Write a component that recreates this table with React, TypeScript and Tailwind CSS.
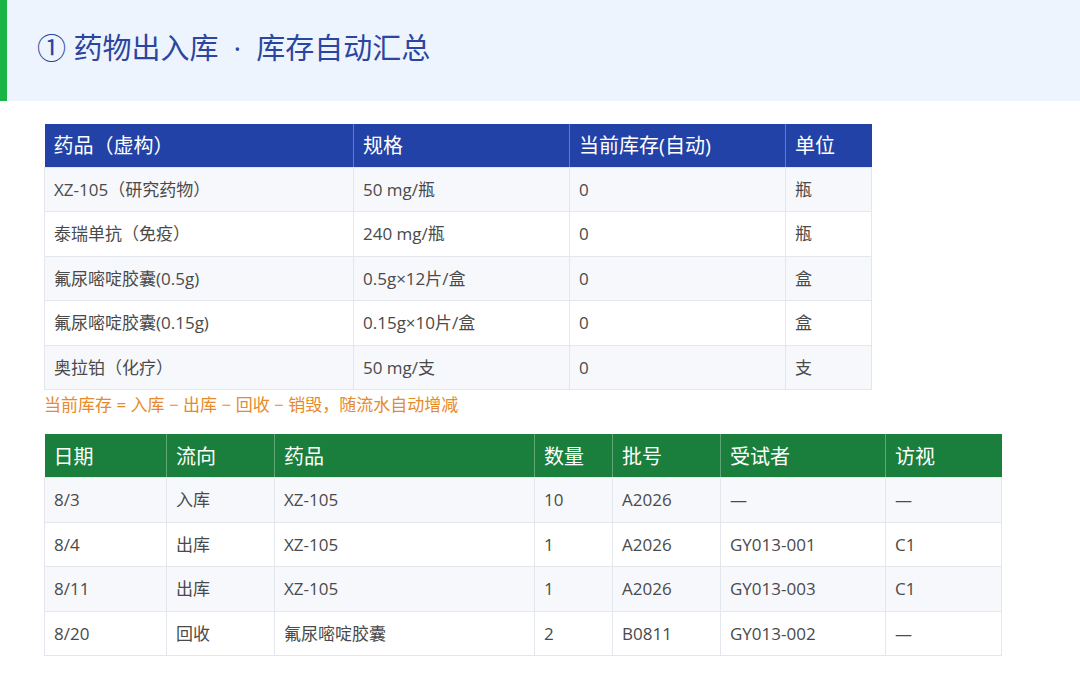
const stockCols = [
  { label: '药品（虚构）', w: 'w-[309px]' },
  { label: '规格', w: 'w-[216px]' },
  { label: '当前库存(自动)', w: 'w-[216px]' },
  { label: '单位', w: 'w-[86px]' },
];

const stockRows = [
  ['XZ-105（研究药物）', '50 mg/瓶', '0', '瓶'],
  ['泰瑞单抗（免疫）', '240 mg/瓶', '0', '瓶'],
  ['氟尿嘧啶胶囊(0.5g)', '0.5g×12片/盒', '0', '盒'],
  ['氟尿嘧啶胶囊(0.15g)', '0.15g×10片/盒', '0', '盒'],
  ['奥拉铂（化疗）', '50 mg/支', '0', '支'],
];

const flowCols = [
  { label: '日期', w: 'w-[122px]' },
  { label: '流向', w: 'w-[108px]' },
  { label: '药品', w: 'w-[260px]' },
  { label: '数量', w: 'w-[78px]' },
  { label: '批号', w: 'w-[108px]' },
  { label: '受试者', w: 'w-[165px]' },
  { label: '访视', w: 'w-[116px]' },
];

const flowRows = [
  ['8/3', '入库', 'XZ-105', '10', 'A2026', '—', '—'],
  ['8/4', '出库', 'XZ-105', '1', 'A2026', 'GY013-001', 'C1'],
  ['8/11', '出库', 'XZ-105', '1', 'A2026', 'GY013-003', 'C1'],
  ['8/20', '回收', '氟尿嘧啶胶囊', '2', 'B0811', 'GY013-002', '—'],
];

type Col = { label: string; w: string };

function DataTable({
  cols,
  rows,
  headBg,
  width,
}: {
  cols: Col[];
  rows: string[][];
  headBg: string;
  width: string;
}) {
  return (
    <table className={`${width} border-collapse table-fixed`}>
      <thead>
        <tr className={headBg}>
          {cols.map((c, i) => (
            <th
              key={c.label}
              className={`${c.w} h-[43px] px-[9px] pt-[2px] text-left align-middle text-[20px] font-normal text-white ${
                i > 0 ? 'border-l border-white/30' : ''
              }`}
            >
              {c.label}
            </th>
          ))}
        </tr>
      </thead>
      <tbody>
        {rows.map((r, ri) => (
          <tr key={ri} className={ri % 2 === 0 ? 'bg-[#f7f8fc]' : 'bg-white'}>
            {r.map((cell, ci) => (
              <td
                key={ci}
                className="h-[44.6px] border border-[#e3e6ec] px-[9px] align-middle text-[17px] text-[#4a4a4a]"
              >
                {cell}
              </td>
            ))}
          </tr>
        ))}
      </tbody>
    </table>
  );
}

export default function App() {
  return (
    <div className="h-[700px] w-[1080px] bg-white font-['Open_Sans','Noto_Sans_CJK_SC',sans-serif]">
      <div className="flex h-[101px] bg-[#eef4fe]">
        <div className="w-[7px] bg-[#1db446]" />
        <h1 className="flex items-center pl-[30px] pb-[6px] text-[29px] font-normal text-[#2b46a0]">
          ① 药物出入库&nbsp;&nbsp;·&nbsp;&nbsp;库存自动汇总
        </h1>
      </div>

      <div className="flex flex-col pl-[44px] pt-[23px]">
        <DataTable cols={stockCols} rows={stockRows} headBg="bg-[#2342a8]" width="w-[827px]" />
        <p className="h-[30px] text-[17px] leading-[30px] text-[#e68a2e]">
          当前库存 = 入库 − 出库 − 回收 − 销毁，随流水自动增减
        </p>
        <div className="mt-[14px]">
          <DataTable cols={flowCols} rows={flowRows} headBg="bg-[#1a7f3c]" width="w-[957px]" />
        </div>
      </div>
    </div>
  );
}
